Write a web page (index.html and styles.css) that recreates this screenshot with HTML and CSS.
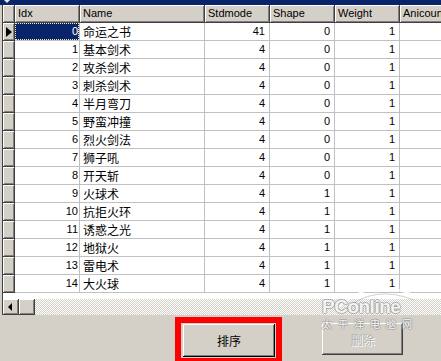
FILE: index.html
```html
<!DOCTYPE html>
<html>
<head>
<meta charset="utf-8">
<link rel="stylesheet" href="styles.css">
</head>
<body>
<div class="window">
  <div class="titlebar"><span class="ticon"></span></div>
  <div class="frame">
    <div class="grid">
      <div class="hd ind"></div><div class="hd">Idx</div><div class="hd">Name</div><div class="hd">Stdmode</div><div class="hd">Shape</div><div class="hd">Weight</div><div class="hd">Anicount</div>

      <div class="ind cur"><span class="tri"></span></div><div class="c num idx sel">0</div><div class="c cjk">命运之书</div><div class="c num">41</div><div class="c num">0</div><div class="c num">1</div><div class="c"></div>
      <div class="ind"></div><div class="c num idx">1</div><div class="c cjk">基本剑术</div><div class="c num">4</div><div class="c num">0</div><div class="c num">1</div><div class="c"></div>
      <div class="ind"></div><div class="c num idx">2</div><div class="c cjk">攻杀剑术</div><div class="c num">4</div><div class="c num">0</div><div class="c num">1</div><div class="c"></div>
      <div class="ind"></div><div class="c num idx">3</div><div class="c cjk">刺杀剑术</div><div class="c num">4</div><div class="c num">0</div><div class="c num">1</div><div class="c"></div>
      <div class="ind"></div><div class="c num idx">4</div><div class="c cjk">半月弯刀</div><div class="c num">4</div><div class="c num">0</div><div class="c num">1</div><div class="c"></div>
      <div class="ind"></div><div class="c num idx">5</div><div class="c cjk">野蛮冲撞</div><div class="c num">4</div><div class="c num">0</div><div class="c num">1</div><div class="c"></div>
      <div class="ind"></div><div class="c num idx">6</div><div class="c cjk">烈火剑法</div><div class="c num">4</div><div class="c num">0</div><div class="c num">1</div><div class="c"></div>
      <div class="ind"></div><div class="c num idx">7</div><div class="c cjk">狮子吼</div><div class="c num">4</div><div class="c num">0</div><div class="c num">1</div><div class="c"></div>
      <div class="ind"></div><div class="c num idx">8</div><div class="c cjk">开天斩</div><div class="c num">4</div><div class="c num">0</div><div class="c num">1</div><div class="c"></div>
      <div class="ind"></div><div class="c num idx">9</div><div class="c cjk">火球术</div><div class="c num">4</div><div class="c num">1</div><div class="c num">1</div><div class="c"></div>
      <div class="ind"></div><div class="c num idx">10</div><div class="c cjk">抗拒火环</div><div class="c num">4</div><div class="c num">1</div><div class="c num">1</div><div class="c"></div>
      <div class="ind"></div><div class="c num idx">11</div><div class="c cjk">诱惑之光</div><div class="c num">4</div><div class="c num">1</div><div class="c num">1</div><div class="c"></div>
      <div class="ind"></div><div class="c num idx">12</div><div class="c cjk">地狱火</div><div class="c num">4</div><div class="c num">1</div><div class="c num">1</div><div class="c"></div>
      <div class="ind"></div><div class="c num idx">13</div><div class="c cjk">雷电术</div><div class="c num">4</div><div class="c num">1</div><div class="c num">1</div><div class="c"></div>
      <div class="ind"></div><div class="c num idx">14</div><div class="c cjk">大火球</div><div class="c num">4</div><div class="c num">1</div><div class="c num">1</div><div class="c"></div>
    </div>
    <div class="hscroll">
      <div class="sbtn"><span class="larrow"></span></div>
      <div class="thumb"></div>
      <div class="track"></div>
    </div>
  </div>
  <div class="panel">
    <div class="hilite"><button class="btn def">排序</button></div>
    <button class="btn dis">删除</button>
  </div>
  <div class="watermark">
    <svg class="arc" width="90" height="30" viewBox="0 0 90 30"><path d="M8 26 Q40 -6 86 14" fill="none" stroke="rgba(255,255,255,0.9)" stroke-width="2"/><path d="M14 28 Q44 2 84 18" fill="none" stroke="rgba(150,150,150,0.45)" stroke-width="1"/></svg>
    <div class="wm-en">PConline</div>
    <div class="wm-cn">太平洋电脑网</div>
  </div>
</div>
</body>
</html>
```
FILE: styles.css
```css
html, body {
  margin: 0;
  padding: 0;
}
body {
  background: #d4d0c8;
  font-family: "Liberation Sans", Arial, sans-serif;
  font-size: 11px;
  color: #000;
}
.window {
  position: relative;
  width: 441px;
  height: 361px;
  overflow: hidden;
  background: #d4d0c8;
}
.titlebar {
  height: 5px;
  background: #0a246a;
  display: flex;
  align-items: flex-start;
}
.ticon {
  margin-left: 4px;
  width: 0;
  height: 0;
  border-left: 3px solid transparent;
  border-right: 3px solid transparent;
  border-top: 3px solid #e8e8f0;
}
.frame {
  margin-left: 2px;
  border-left: 1px solid #404040;
  height: 310px;
  display: flex;
  flex-direction: column;
  overflow: hidden;
}
.grid {
  display: grid;
  grid-template-columns: 12px 65px 125px 65px 65px 65px 80px;
  grid-auto-rows: 18px;
  align-content: start;
  background: #fff;
  height: 294px;
  overflow: hidden;
}
.grid > div {
  box-sizing: border-box;
  white-space: nowrap;
  overflow: hidden;
}
.hd {
  background: #d4d0c8;
  border-right: 1px solid #404040;
  border-bottom: 1px solid #404040;
  box-shadow: inset 1px 1px #fff, inset -1px -1px #808080;
  padding: 0 3px;
  line-height: 17px;
}
.ind {
  background: #d4d0c8;
  border-right: 1px solid #404040;
  border-bottom: 1px solid #404040;
  box-shadow: inset 1px 1px #fff, inset -1px -1px #808080;
  display: flex;
  align-items: center;
  justify-content: center;
}
.hd.ind {
  padding: 0;
}
.tri {
  width: 0;
  height: 0;
  border-left: 6px solid #000;
  border-top: 5px solid transparent;
  border-bottom: 5px solid transparent;
}
.c {
  border-right: 1px solid #c0c0c0;
  border-bottom: 1px solid #c0c0c0;
  padding: 0 3px;
  line-height: 17px;
}
.num {
  text-align: right;
  padding-right: 4px;
}
.num.idx {
  padding-right: 1px;
}
.cjk {
  font-family: "Noto Sans CJK SC", sans-serif;
  font-size: 12px;
  padding-left: 3px;
}
.sel {
  background: #0a246a;
  color: #fff;
  position: relative;
}
.sel::after {
  content: "";
  position: absolute;
  inset: 0 0 0 0;
  border: 1px dotted #f0f0c0;
}
.hscroll {
  height: 16px;
  display: flex;
}
.sbtn, .thumb {
  width: 16px;
  height: 16px;
  box-sizing: border-box;
  background: #d4d0c8;
  box-shadow: inset -1px -1px #404040, inset 1px 1px #fff, inset -2px -2px #808080;
  display: flex;
  align-items: center;
  justify-content: center;
}
.larrow {
  width: 0;
  height: 0;
  border-right: 4px solid #000;
  border-top: 4px solid transparent;
  border-bottom: 4px solid transparent;
  margin-left: -2px;
}
.track {
  flex: 1;
  background: repeating-conic-gradient(#d4d0c8 0 25%, #ffffff 0 50%) 0 0 / 2px 2px;
}
.panel {
  height: 46px;
  display: flex;
  align-items: flex-start;
}
.hilite {
  margin-left: 175px;
  margin-top: 2px;
  border: 6px solid #f00;
  padding: 1px 1px 1px 2px;
  display: flex;
}
.btn {
  font-family: "Noto Sans CJK SC", sans-serif;
  font-size: 12px;
  background: #d4d0c8;
  border: none;
  padding: 0;
  margin: 0;
  color: #000;
}
.btn.def {
  width: 92px;
  height: 33px;
  box-shadow: inset -1px -1px #000, inset 1px 1px #fff, inset -2px -2px #808080;
}
.btn.dis {
  margin-left: 40px;
  margin-top: 8px;
  width: 81px;
  height: 32px;
  color: #b0b0b0;
  text-shadow: 1px 1px #fff;
  box-shadow: inset -1px -1px #404040, inset 1px 1px #fff, inset -2px -2px #808080;
}
.watermark {
  position: absolute;
  left: 320px;
  top: 282px;
  width: 110px;
  height: 50px;
  pointer-events: none;
}
.arc {
  position: absolute;
  left: 10px;
  top: 0;
}
.wm-en {
  position: absolute;
  left: 2px;
  top: 14px;
  font-family: "Liberation Sans", Arial, sans-serif;
  font-size: 19px;
  font-weight: bold;
  color: rgba(255, 255, 255, 0.92);
  text-shadow: 1px 0 rgba(140, 140, 140, 0.6), -1px 0 rgba(140, 140, 140, 0.6), 0 1px rgba(140, 140, 140, 0.6), 0 -1px rgba(140, 140, 140, 0.6);
  letter-spacing: -0.5px;
}
.wm-cn {
  position: absolute;
  left: 2px;
  top: 37px;
  font-family: "Noto Sans CJK SC", sans-serif;
  font-size: 10px;
  line-height: 10px;
  letter-spacing: 6px;
  color: rgba(255, 255, 255, 0.92);
  text-shadow: 1px 0 rgba(140, 140, 140, 0.6), -1px 0 rgba(140, 140, 140, 0.6), 0 1px rgba(140, 140, 140, 0.6), 0 -1px rgba(140, 140, 140, 0.6);
}
```
